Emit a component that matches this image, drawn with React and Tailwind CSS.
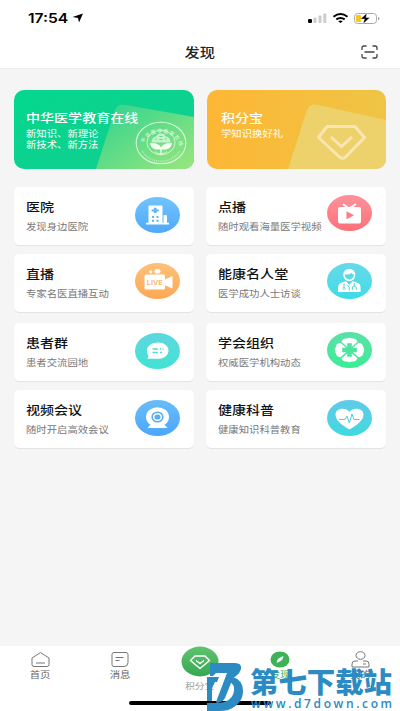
import React from "react";

const FONT = "font-['Inter','Noto_Sans_CJK_SC',sans-serif]";

function Emblem() {
  return (
    <svg viewBox="0 0 52 44" className="h-[44px] w-[52px]" fill="none" stroke="#d9f7dc">
      <defs>
        <path id="arcTop" d="M7.500 27 A18.500 15.200 0 1 1 44.500 27" />
      </defs>
      <ellipse cx="26" cy="22" rx="24.800" ry="20.800" strokeWidth="1.100" />
      <ellipse cx="26" cy="21.500" rx="14" ry="12.300" strokeWidth=".9" />
      <text fill="#d9f7dc" stroke="none" fontSize="5" fontWeight="500" textLength="46">
        <textPath href="#arcTop" startOffset="5">中华医学教育在线</textPath>
      </text>
      <path d="M7.500 30 A20 16.500 0 0 0 44.500 30" strokeWidth="1.500" strokeDasharray="1 .9" opacity=".65" />
      <path d="M16.500 20q1.500-5 5-4.500.5-3 4.500-3t4.500 3q3.500-.5 5 4.500v1.500h-19z" fill="#d9f7dc" stroke="none" opacity=".8" />
      <path d="M20.500 18h1.500M24.500 15.500h3M24.500 18.500h3M30 18h1.500" stroke="#62d98a" strokeWidth="1.200" />
      <path d="M25.300 34v-5.500c-6 .5-9.800-1.500-10.300-6.500 5.500-.5 9.500 1 11 4.500 1.500-3.500 5.500-5 11-4.500-.5 5-4.300 7-10.300 6.500V34z" fill="#f3fff3" stroke="none" />
      <path d="M20 30.500c3 3 9 3 12 0" strokeWidth="1" />
    </svg>
  );
}

function Hospital() {
  return (
    <g>
      <path fill="#fff" d="M13.500 9.500q0-1 1-1h12q1 0 1 1v16.300h1v-6.800q0-1 1-1h1.500q1 0 1 1v6.800h2v1.700H11v-1.700h2.500z" />
      <path fill="#5db5fa" d="M18.900 10.700h2.600v1.700h2.300v2h-2.300v1.700h-2.600v-1.700h-2.300v-2h2.300zM17 19h2v2h-2zM21.500 19h2v2h-2zM17 22.700h2v2h-2zM21.500 22.700h2v2h-2z" />
    </g>
  );
}

function Tv() {
  return (
    <g>
      <path d="M16 9l6 4.500L29 9" stroke="#fff" strokeWidth="2" fill="none" />
      <rect x="11" y="12" width="23" height="16.500" rx="2" fill="#fff" />
      <path d="M19.500 16.300v8l7.500-4z" fill="#fd7c86" />
    </g>
  );
}

function Live() {
  return (
    <g fill="#fff">
      <circle cx="15.700" cy="8.800" r="1.600" />
      <ellipse cx="22.500" cy="8.200" rx="3" ry="2.300" />
      <rect x="9.500" y="11.500" width="20.500" height="15" rx="1.500" />
      <path d="M29 17l8.500-4v12.500L29 22z" />
      <text x="11.800" y="22" fontSize="6.200" fontWeight="600" fill="#fdb468" textLength="16" lengthAdjust="spacingAndGlyphs">LIVE</text>
    </g>
  );
}

function Doctor() {
  return (
    <g>
      <ellipse cx="22.300" cy="12" rx="6" ry="6.200" fill="#fff" />
      <path d="M17.800 11.500q5 .5 6.500-1.800.8 1.800 2.600 1.800-.3 4.600-4.500 4.900-4.300-.2-4.600-4.900z" fill="#58d8e8" />
      <path d="M11 29v-4.500q0-4 4-5l4-1.200 3.300 3.700 3.300-3.700 4 1.200q4 1 4 5V29z" fill="#fff" />
      <path d="M17 20.500v4M22.300 27.500v-3l-2-2.500M27.300 20v3M25.300 27v-2q0-2 2-2t2 2v2" stroke="#4dd6e5" strokeWidth="1" fill="none" />
      <circle cx="17" cy="25.500" r="1.100" fill="none" stroke="#4dd6e5" strokeWidth=".8" />
    </g>
  );
}

function Chat() {
  return (
    <g>
      <path d="M23 9.500c6 0 10.500 3.300 10.500 8s-4.500 8.300-10.500 8.300H12.500l1-3.300c-1.300-1.500-1.500-3-1.500-5 0-4.700 5-8 11-8z" fill="#fff" />
      <path d="M17.500 16h5.500M25 16h1M27.500 16h1M17.500 19.500h5.500M25 19.500h2" stroke="#4dddda" strokeWidth="1.300" />
    </g>
  );
}

function Flower() {
  return (
    <g>
      <path fill="#fff" d="M22.500 17L14.500 9.800q1.500-4 5.500-3.300 2.500-1.400 5 0 4-.7 5.500 3.300zM22.500 19.500l-8 6.700q1.500 4 5.500 3.300 2.500 1.400 5 0 4 .7 5.500-3.300zM21.500 18l-8-7.300q-4.500.5-4.500 3.800-2.500 3.500 0 7 0 3.300 4.500 3.800zM23.500 18l8-7.300q4.500.5 4.500 3.800 2.500 3.500 0 7 0 3.300-4.500 3.800z" />
      <path fill="#4ce4a0" d="M20.200 11.300h4.600v4.500h5v4.400h-5v4.500h-4.600v-4.500h-5v-4.400h5z" />
    </g>
  );
}

function Webcam() {
  return (
    <g>
      <path fill="#fff" d="M16 24L12.500 28h20L29 24z" />
      <ellipse cx="22.500" cy="17" rx="11.500" ry="9.800" fill="#fff" />
      <ellipse cx="22.500" cy="17" rx="5.400" ry="4.700" fill="none" stroke="#56acf5" strokeWidth="1.500" />
      <ellipse cx="22.500" cy="17" rx="3" ry="2.600" fill="#56acf5" />
    </g>
  );
}

function Heart() {
  return (
    <g>
      <path fill="#fff" d="M22.500 29.500C13 24 8.500 19.500 8.500 14.500c0-6 10-8 14-2.500 4-5.500 14-3.500 14 2.500 0 5-4.500 9.500-14 15z" />
      <path d="M12 19.500h6l2-3.500 2.300 7 2.700-9 2 5.500h5.500" fill="none" stroke="#4fcde2" strokeWidth="1" />
    </g>
  );
}

const cards = [
  { title: "医院", sub: "发现身边医院", from: "from-[#72c4fb]", to: "to-[#4ea9fa]", Icon: Hospital, pos: "mt-[10px]" },
  { title: "点播", sub: "随时观看海量医学视频", from: "from-[#fd929b]", to: "to-[#fd7079]", Icon: Tv, pos: "mt-[8px]" },
  { title: "直播", sub: "专家名医直播互动", from: "from-[#fdc179]", to: "to-[#fda854]", Icon: Live, pos: "mt-[9px]" },
  { title: "能康名人堂", sub: "医学成功人士访谈", from: "from-[#66d9e8]", to: "to-[#3ddbe8]", Icon: Doctor, pos: "mt-[9px]" },
  { title: "患者群", sub: "患者交流园地", from: "from-[#5dd7e0]", to: "to-[#3ee3d3]", Icon: Chat, pos: "mt-[10px]" },
  { title: "学会组织", sub: "权威医学机构动态", from: "from-[#5ae0a8]", to: "to-[#37ed94]", Icon: Flower, pos: "mt-[9px]" },
  { title: "视频会议", sub: "随时开启高效会议", from: "from-[#68bdf8]", to: "to-[#4ca6fc]", Icon: Webcam, pos: "mt-[10px]" },
  { title: "健康科普", sub: "健康知识科普教育", from: "from-[#61c9e8]", to: "to-[#3ddae0]", Icon: Heart, pos: "mt-[10px]" },
];

function Card({ title, sub, from, to, Icon, pos }) {
  return (
    <div className="flex h-[58px] justify-between rounded-[5px] bg-white pl-[12px] pr-[14px] shadow-[0_1px_1px_rgba(0,0,0,0.07)]">
      <div className="w-0 whitespace-nowrap pt-[13px]">
        <div className="w-max origin-left scale-x-[1.17] text-[12px] font-medium leading-[16px] text-[#111]">{title}</div>
        <div className="mt-[5px] w-max origin-left scale-x-[1.15] text-[9px] leading-[12px] text-[#777]">{sub}</div>
      </div>
      <div className={`h-[36px] w-[45px] rounded-[50%] bg-gradient-to-b ${from} ${to} ${pos}`}>
        <svg viewBox="0 0 45 36" className="h-[36px] w-[45px]"><Icon /></svg>
      </div>
    </div>
  );
}

function CardGroup({ items }) {
  return (
    <div className="grid grid-cols-2 gap-x-[12px] gap-y-[9px]">
      {items.map((c) => <Card key={c.title} {...c} />)}
    </div>
  );
}

function StatusBar() {
  return (
    <div className="flex h-[36px] items-center pl-[28px] pr-[20px]">
      <span className="w-[41px] origin-left scale-x-[1.2] text-[13px] font-semibold leading-[16px] text-black">17:54</span>
      <svg viewBox="0 0 12 10" className="ml-[3px] h-[10px] w-[12px]"><path d="M11 .5L7 9.500 6 5 .5 4z" fill="#000" /></svg>
      <svg viewBox="0 0 74 14" className="ml-auto h-[14px] w-[74px]">
        <rect x="2" y="8" width="4" height="4" rx="1.200" fill="#000" />
        <rect x="7.500" y="6.500" width="3" height="5.500" rx=".7" fill="#ccc" />
        <rect x="12.500" y="4.500" width="3" height="7.500" rx=".7" fill="#ccc" />
        <rect x="17.300" y="2.500" width="3" height="9.500" rx=".7" fill="#ccc" />
        <g fill="none" stroke="#000" strokeWidth="2">
          <path d="M27.500 5.700q7-5.300 14 0" />
          <path d="M30.300 8.400q4.200-3 8.400 0" />
        </g>
        <path d="M32.200 10.200q2.300-1.600 4.600 0L34.500 12z" fill="#000" />
        <rect x="48.500" y="2.500" width="22" height="10" rx="3" fill="none" stroke="#aaa" />
        <rect x="50" y="4" width="5" height="7" rx="1" fill="#f8c51c" />
        <path d="M61 2l-6.500 6h4l-1.500 5 7-6.500h-4z" fill="#000" stroke="#fff" strokeWidth=".4" />
        <path d="M72 6v3q1.500-.5 1.500-1.500T72 6z" fill="#999" />
      </svg>
    </div>
  );
}

function Tab({ label, children }) {
  return (
    <div className="flex w-[80px] flex-col items-center pt-[5px]">
      {children}
      <span className="mt-[1px] scale-x-[1.15] text-[9px] leading-[12px] text-[#666]">{label}</span>
    </div>
  );
}

function Watermark() {
  return (
    <div className="absolute left-[207px] top-[660px] h-[51px] w-[193px]">
      <svg viewBox="0 0 193 51" className="h-[51px] w-[193px]" fill="#2b8bc2">
        <path d="M26 17Q36 20 36 31 36 44 21 50 18 51 12 51H0V43H9Q25 43 27 31 28 25 23 22z" />
        <path d="M3 3H28Q35 3 34 9 33 13 29 16L26 18 18 38Q16 42 10 43L9 42 20 13H9L6 16H3z" />
        <path d="M0 17H12L10 22H8L5 28V41H0z" />
        <text x="43" y="32.500" fontSize="28" fontWeight="900" textLength="142" lengthAdjust="spacingAndGlyphs">第七下载站</text>
        <text x="44" y="48" fontSize="12" fontFamily="Open Sans" fontWeight="600" textLength="141">www.d7down.com</text>
      </svg>
    </div>
  );
}

export default function App() {
  return (
    <div className={`relative flex h-[711px] w-[400px] flex-col overflow-hidden bg-white ${FONT}`}>
      <StatusBar />
      <header className="grid h-[33px] grid-cols-3 items-center border-b border-[#eee]">
        <span />
        <h1 className="scale-x-[1.17] text-center text-[13px] font-medium leading-[18px] text-[#222]">发现</h1>
        <svg viewBox="0 0 17 14" className="mr-[22px] h-[14px] w-[17px] justify-self-end" fill="none" stroke="#444" strokeWidth="1.300">
          <path d="M1 5V3q0-2 2-2h2.500M11.500 1H14q2 0 2 2v2M16 9v2q0 2-2 2h-2.500M5.500 13H3q-2 0-2-2V9M3.500 7h10" />
        </svg>
      </header>

      <main className="flex-1 bg-[#f5f5f5] pl-[14px] pr-[14px] pt-[21px]">
        <div className="grid grid-cols-2 gap-x-[12px]">
          <div className="flex h-[79px] overflow-hidden rounded-[10px] bg-gradient-to-br from-[#04d78d] to-[#12cd91]">
            <div className="relative h-full w-full">
              <svg viewBox="0 0 180 79" className="absolute inset-0 h-full w-full">
                <defs>
                  <linearGradient id="leaf" x1="0" y1="0" x2="1" y2="1"><stop stopColor="#2bd391" /><stop offset="1" stopColor="#9be67c" /></linearGradient>
                </defs>
                <path d="M82 79L101 20q3-7 11-5l68 12v52z" fill="url(#leaf)" />
              </svg>
              <div className="relative flex justify-between">
                <div className="w-0 whitespace-nowrap pl-[12px] pt-[21px] text-white">
                  <div className="w-max origin-left scale-x-[1.17] text-[12px] font-medium leading-[16px]">中华医学教育在线</div>
                  <div className="mt-[1px] w-max origin-left scale-x-[1.15] text-[9px] leading-[11px]">新知识、新理论<br />新技术、新方法</div>
                </div>
                <div className="mr-[7px] mt-[31px]"><Emblem /></div>
              </div>
            </div>
          </div>
          <div className="ml-px flex h-[79px] overflow-hidden rounded-[10px] bg-gradient-to-r from-[#fdb735] to-[#efc445]">
            <div className="relative h-full w-full">
              <svg viewBox="0 0 179 79" preserveAspectRatio="none" className="absolute inset-0 h-full w-full">
                <path d="M81 79L100 20q3-7 11-5l68 15v49z" fill="#edd16a" />
                <path d="M120 36.500h28l9.500 11L138 67.500q-2.500 1.500-5 0L111.500 47.500z" fill="none" stroke="#f9e6b4" strokeWidth="3" strokeLinejoin="round" />
                <path d="M124 47l10.500 9.500L145 47" fill="none" stroke="#f9e6b4" strokeWidth="3" />
              </svg>
              <div className="relative pl-[14px] pt-[21px] text-white">
                <div className="w-max origin-left scale-x-[1.17] text-[12px] font-medium leading-[16px]">积分宝</div>
                <div className="mt-[1px] w-max origin-left scale-x-[1.15] text-[9px] leading-[11px]">学知识换好礼</div>
              </div>
            </div>
          </div>
        </div>
        <div className="mt-[18px] flex flex-col gap-[11px]">
          <CardGroup items={cards.slice(0, 4)} />
          <CardGroup items={cards.slice(4)} />
        </div>
      </main>

      <nav className="flex h-[65px] bg-white">
        <Tab label="首页">
          <svg viewBox="0 0 19 16" className="h-[17px] w-[19px]" fill="none" stroke="#777" strokeWidth="1">
            <path d="M1 6.500L9.500 1 18 6.500V13q0 2-2 2H3q-2 0-2-2zM5 11.500h9" />
          </svg>
        </Tab>
        <Tab label="消息">
          <svg viewBox="0 0 18 16" className="h-[17px] w-[18px]" fill="none" stroke="#777" strokeWidth="1">
            <path d="M3 1h12q2 0 2 2v8q0 4-4 4H3q-2 0-2-2V3q0-2 2-2zM4.500 6h8M4.500 9h4" />
          </svg>
        </Tab>
        <div className="flex w-[80px] flex-col items-center">
          <svg viewBox="0 0 38 31" className="h-[31px] w-[38px]">
            <defs><linearGradient id="gem" x1="0" y1="0" x2="0" y2="1"><stop stopColor="#61c36d" /><stop offset="1" stopColor="#34a853" /></linearGradient></defs>
            <ellipse cx="19" cy="15.500" rx="18.500" ry="15" fill="url(#gem)" />
            <path d="M14 10h10l4.500 4.500-9.500 8-9.500-8zM15 14.500l4 3 4-3" fill="none" stroke="#fff" strokeWidth="1.500" strokeLinejoin="round" />
          </svg>
          <span className="mt-[3px] scale-x-[1.15] text-[8.500px] leading-[12px] text-[#999]">积分宝</span>
        </div>
        <div className="flex w-[80px] flex-col items-center pt-[5px]">
          <svg viewBox="0 0 20 17" className="h-[17px] w-[20px]">
            <ellipse cx="10" cy="8.500" rx="9.500" ry="8" fill="#3fb157" />
            <path d="M13.500 5q-.2 3.300-2.700 5L6.500 12q.2-3.300 2.700-5z" fill="#fff" />
          </svg>
          <span className="mt-[1px] scale-x-[1.15] text-[9px] leading-[12px] text-[#3fb157]">发现</span>
        </div>
        <Tab label="我的">
          <svg viewBox="0 0 19 17" className="h-[17px] w-[19px]" fill="none" stroke="#777" strokeWidth="1">
            <ellipse cx="9.500" cy="4.500" rx="4.500" ry="3.800" />
            <path d="M7 10H4q-3 0-3 3v3h17v-3q0-3-3-3h-3M12 13h3" />
          </svg>
        </Tab>
      </nav>
      <div className="absolute left-[129px] top-[701px] h-[4px] w-[142px] rounded-full bg-black" />
      <Watermark />
    </div>
  );
}
